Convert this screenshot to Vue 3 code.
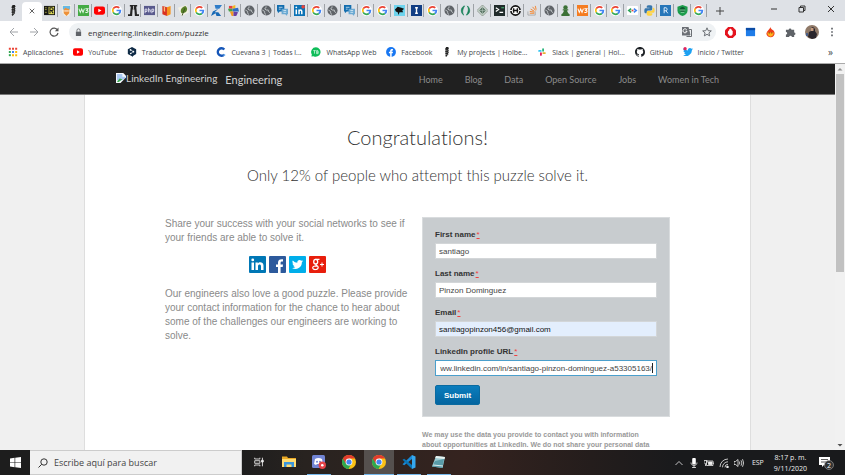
<script setup>
import { ref } from 'vue'

const tabs = [
  'code-r', 'hand', 'w3g', 'youtube', 'google', 'column', 'php', 'book', 'leaf', 'google',
  'zed', 'puzzle', 'globe', 'globe', 'chat', 'linkedin', 'google', 'globe', 'chat', 'google',
  'google', 'duck', 'letter-i', 'google', 'globe', 'parens', 'diamond', 'terminal', 'ring', 'stack',
  'globe', 'pawn', 'w3o', 'google', 'google', 'angle', 'python', 'letter-r', 'shield', 'google'
]

const bookmarks = [
  { icon: 'apps', label: 'Aplicaciones' },
  { icon: 'youtube', label: 'YouTube' },
  { icon: 'deepl', label: 'Traductor de DeepL' },
  { icon: 'cuevana', label: 'Cuevana 3 | Todas l...' },
  { icon: 'whatsapp', label: 'WhatsApp Web' },
  { icon: 'facebook', label: 'Facebook' },
  { icon: 'seahorse', label: 'My projects | Holbe...' },
  { icon: 'slack', label: 'Slack | general | Hol...' },
  { icon: 'github', label: 'GitHub' },
  { icon: 'bird', label: 'Inicio / Twitter' }
]

const nav = ['Home', 'Blog', 'Data', 'Open Source', 'Jobs', 'Women in Tech']
const social = [
  { id: 'in', name: 'LinkedIn' },
  { id: 'fb', name: 'Facebook' },
  { id: 'tw', name: 'Twitter' },
  { id: 'gp', name: 'Google Plus' }
]

const fields = ref([
  { id: 'first', label: 'First name', type: 'text', value: 'santiago' },
  { id: 'last', label: 'Last name', type: 'text', value: 'Pinzon Dominguez' },
  { id: 'email', label: 'Email', type: 'email', value: 'santiagopinzon456@gmail.com' },
  { id: 'url', label: 'LinkedIn profile URL', type: 'text', value: 'ww.linkedin.com/in/santiago-pinzon-dominguez-a53305163/' }
])

const apps = [
  { icon: 'folder', state: '' },
  { icon: 'discord', state: 'open' },
  { icon: 'chrome', state: '' },
  { icon: 'chrome', state: 'open active' },
  { icon: 'vscode', state: 'open' },
  { icon: 'notepad', state: 'open' }
]
const query = ref('')
const address = ref('engineering.linkedin.com/puzzle')
</script>

<template>
  <svg class="defs" aria-hidden="true">
    <symbol id="seahorse" viewBox="0 0 12 12"><path d="M5 0h2.500l.8 2-1 .8.9 1.200-.7 1.200.7 1.300-1 1 .6 1.300-1.200 1.200L5 12 3.800 10.500l1-.8-1-1.700.6-1.500-.7-1.400.8-1.300-.8-1.400z" fill="#222"/><path d="M4.800 4h2M4.800 6.500h2M4.800 9h2" stroke="#aaa" stroke-width=".6"/></symbol>
    <symbol id="code-r" viewBox="0 0 12 12"><path d="M0 1h12v10H0z" fill="#191a17"/><path d="M5 2h6v8H5z" fill="#e5e05a"/><path d="M6.500 9V3h2a1.500 1.500 0 0 1 0 3h-2M8 6l2 3" fill="none" stroke="#191a17" stroke-width="1.200"/><path d="M1 3h2M1 5h2M1 8h2" stroke="#bdb94a" stroke-width=".8"/></symbol>
    <symbol id="hand" viewBox="0 0 12 12"><path d="M1 0h10v8L8 12H4L1 8z" fill="#f3efe3"/><path d="M2 1h8v4H2z" fill="#67b9e5"/><path d="M3 5 5 3l2 1 2 0v5L6 12 3 9z" fill="#ee9138"/><path d="M3.500 6.500h5" stroke="#fff"/></symbol>
    <symbol id="w3g" viewBox="0 0 12 12"><path d="M0 0h12v12H0z" fill="#45ab45"/><path d="m1 4 1.500 4L4 4.500 5.500 8 7 4M8 4h3L9.500 6C12 6 11 9 8 8" fill="none" stroke="#e9f7e9" stroke-width="1.100"/></symbol>
    <symbol id="w3o" viewBox="0 0 12 12"><path d="M0 0h12v12H0z" fill="#f57c20"/><path d="m1 4 1.500 4L4 4.500 5.500 8 7 4M8 4h3L9.500 6C12 6 11 9 8 8" fill="none" stroke="#fff" stroke-width="1.100"/></symbol>
    <symbol id="youtube" viewBox="0 0 12 12"><rect y="1.500" width="12" height="9" rx="2.300" fill="#f00"/><path d="m4.700 4 3.500 2-3.500 2z" fill="#fff"/></symbol>
    <symbol id="google" viewBox="0 0 12 12"><circle cx="6" cy="6" r="6" fill="#fff"/><path d="M9 3.200A4.200 4.200 0 0 0 2.400 4" fill="none" stroke="#ea4335" stroke-width="1.900"/><path d="M2.400 4a4.200 4.200 0 0 0 0 4" fill="none" stroke="#fbbc05" stroke-width="1.900"/><path d="M2.400 8A4.200 4.200 0 0 0 8.600 9.300" fill="none" stroke="#34a853" stroke-width="1.900"/><path d="M8.600 9.300A4 4 0 0 0 10.200 6H6" fill="none" stroke="#4285f4" stroke-width="1.900"/></symbol>
    <symbol id="column" viewBox="0 0 12 12"><path d="M2 0h8v1.500H9L9.800 10H12v2H7.500L7 5H5l-.5 7H0v-2h2.200L3 1.500H2z" fill="#262626"/><path d="M6 1v4" stroke="#eee" stroke-width=".8"/></symbol>
    <symbol id="php" viewBox="0 0 12 12"><path d="M0 1h12v10H0z" fill="#58598c"/><path d="M1.200 9V4.500h2v2.500h-2M5 3v5M5 5.200h1.800V8M8.600 9V4.500h2v2.500h-2" fill="none" stroke="#f1f1fb" stroke-width=".9"/></symbol>
    <symbol id="book" viewBox="0 0 12 12"><path d="m1.500 1 5 1.500V12l-5-2z" fill="#d9301f"/><path d="M6.500 2.500 10.500 1v9l-4 2z" fill="#f7941d"/><path d="M3 1.500v5l1.500 1v-5z" fill="#f8c079"/></symbol>
    <symbol id="leaf" viewBox="0 0 12 12"><path d="m0 3 9-3 3 8-8 4z" fill="#f4f1e4"/><path d="M8 1c3 2 2.500 6-1 7.500L4 9C1.500 6 4 2 8 1z" fill="#5a812b"/><path d="m4.500 11.500 3-8" stroke="#38521a"/></symbol>
    <symbol id="zed" viewBox="0 0 12 12"><path d="M4 0h8L9 4H5z" fill="#2f7cc8"/><path d="m8 4-4 4h4l3 4H6L5 9 0 12l2-5z" fill="#1668b5"/></symbol>
    <symbol id="puzzle" viewBox="0 0 12 12"><path d="M1 1h4v3H1z" fill="#e74040"/><path d="m5 1 3-1v4H5z" fill="#f5b91a"/><path d="M0 4h5v3H1z" fill="#46a147"/><path d="m5 4 6-1 1 4H5z" fill="#2c6ec5"/><path d="M2 7h4v5H4z" fill="#f39a22"/><path d="m6 7 5 1-2 4H6z" fill="#6941a3"/></symbol>
    <symbol id="globe" viewBox="0 0 12 12"><circle cx="6" cy="6" r="5.500" fill="#5f6368"/><path d="M1.500 5.500 4 7v1.500l1 2M5.500 1.500v1.500L4 4l1.500 1.500H8V7l2 1.500" stroke="#cfd3d6" stroke-width=".9" fill="none"/></symbol>
    <symbol id="chat" viewBox="0 0 12 12"><path d="M0 0h8v7H3L1 9V7H0z" fill="#126dae"/><path d="M5 4h7v6h-1v2L9 10H5z" fill="#6ba9d2"/><path d="M2 2.500h4M2 4.500h2M7 6h3M7 8h3" stroke="#e8f4fb" stroke-width=".8"/></symbol>
    <symbol id="linkedin" viewBox="0 0 12 12"><path d="M0 0h12v12H0z" fill="#0b72b5"/><path d="M2.500 5v5M5.500 10V5m0 2c0-2 3-2 3 0v3" fill="none" stroke="#fff" stroke-width="1.600"/><circle cx="2.500" cy="2.500" r="1" fill="#fff"/><circle cx="10" cy="2" r="2" fill="#e8433c"/></symbol>
    <symbol id="duck" viewBox="0 0 12 12"><path d="M0 0h12v12H0z" fill="#6ed3ed"/><path d="m1 5 3-3 4 1 3 1-2 2 1 2-4 0-1 3-1-3-2-1z" fill="#111"/></symbol>
    <symbol id="letter-i" viewBox="0 0 12 12"><path d="M0 0h12v12H0z" fill="#123e84"/><path d="M4.500 3h3M6 3v6M4.500 9h3" stroke="#fff" stroke-width="1.500"/></symbol>
    <symbol id="parens" viewBox="0 0 12 12"><path d="M5 1C1 2 0 8 4 11 2 8 3 4 5 1zM8 1c4 3 3 9-1 10 2-3 3-7 1-10z" fill="#178158" stroke="#178158" stroke-width=".8"/></symbol>
    <symbol id="diamond" viewBox="0 0 12 12"><path d="m6 0 6 6-6 6-6-6z" fill="#dfe7e1" stroke="#879289"/><path d="m6 2 4 4-4 4-4-4z" fill="#5c7767"/><path d="M6 1v10M1 6h10" stroke="#a9bbb0" stroke-width=".7"/></symbol>
    <symbol id="terminal" viewBox="0 0 12 12"><path d="M0 0h12v12H0z" fill="#202b2b"/><path d="m2 3 3 2-3 2M6 8h4" stroke="#fff" fill="none" stroke-width="1.300"/><path d="M8 3h3" stroke="#4cc87a"/></symbol>
    <symbol id="ring" viewBox="0 0 12 12"><circle cx="6" cy="6" r="5" fill="#fff" stroke="#111" stroke-width="1.800"/><path d="M0 6h12" stroke="#fff" stroke-width="1"/><path d="M3 6h6M4 3.500v5M8 3.500v5" stroke="#111" stroke-width="1.500"/></symbol>
    <symbol id="stack" viewBox="0 0 12 12"><path d="M1 7v4h8V7" fill="none" stroke="#aaa"/><path d="M3 9h5M3 7l5 .8M4 4.500l4 2.300M6 2l3.500 4M9 1l1 4" stroke="#f48024"/></symbol>
    <symbol id="pawn" viewBox="0 0 12 12"><circle cx="6" cy="2.600" r="2.400" fill="#3c7136"/><path d="M3 4.500h6v1.500H7.500L9 9l1.500 1v2h-9v-2L3 9l1.500-3H3z" fill="#3c7136"/></symbol>
    <symbol id="angle" viewBox="0 0 12 12"><rect y="1" width="12" height="10" rx="1" fill="#fff"/><path d="M4.500 4 2 6l2.500 2" stroke="#2fa45b" stroke-width="1.800" fill="none"/><path d="m7.500 4 2.500 2-2.500 2" stroke="#4285f4" stroke-width="1.800" fill="none"/><path d="M5 6h2" stroke="#e54335" stroke-width="1.800"/></symbol>
    <symbol id="python" viewBox="0 0 12 12"><path d="M3 3V1.500C3 0 9 0 9 1.500V5L8 6H4L3 7v2H1.500C0 9 0 3.500 1.500 3.500H6V3z" fill="#3776ab"/><path d="M9 9v1.500C9 12 3 12 3 10.500V7.500l1-1h4l1.500-1V3h1C12 3 12 8.500 10.500 8.500H6V9z" fill="#ffd343"/></symbol>
    <symbol id="letter-r" viewBox="0 0 12 12"><path d="M0 0h12v12H0z" fill="#2776b9"/><path d="M4.500 9V3H6.500a1.700 1.700 0 0 1 0 3.300h-2M6.500 6.300 8.500 9" stroke="#e8f3ff" fill="none"/></symbol>
    <symbol id="shield" viewBox="0 0 12 12"><path d="m6 0 5.500 2v4C11.500 9 9 11 6 12 3 11 .5 9 .5 6V2z" fill="#1c9c4b"/><circle cx="6" cy="5" r="2.800" fill="#0b5930"/><path d="M3 5.500h6M4 8h4" stroke="#8bd7a5"/></symbol>
    <symbol id="apps" viewBox="0 0 12 12"><path d="M1 1h2.400v2.400H1zM4.800 1h2.400v2.400H4.800zM8.600 1H11v2.400H8.600z" fill="#ea4335"/><path d="M1 4.800h2.400v2.400H1z" fill="#34a853"/><path d="M4.800 4.800h2.400v2.400H4.800z" fill="#4285f4"/><path d="M8.600 4.800H11v2.400H8.600zM4.800 8.600h2.400V11H4.800zM8.600 8.600H11V11H8.600z" fill="#fbbc05"/><path d="M1 8.600h2.400V11H1z" fill="#34a853"/></symbol>
    <symbol id="deepl" viewBox="0 0 12 12"><path d="m6 0 5 2.800v5.700L8 10.200 6 12v-1L1 8.500V2.800z" fill="#0f2b46"/><path d="m4.500 3.500 3 2-3 2.300" stroke="#fff" fill="none" stroke-width=".7"/><circle cx="4.300" cy="3.500" r="1" fill="#fff"/><circle cx="7.700" cy="5.600" r="1" fill="#fff"/><circle cx="4.500" cy="7.800" r="1" fill="#fff"/></symbol>
    <symbol id="cuevana" viewBox="0 0 12 12"><path d="M10 3A4.500 4.500 0 1 0 10 9" fill="none" stroke="#1656b8" stroke-width="2.800"/><circle cx="10" cy="9.500" r="1.200" fill="#79b7f2"/></symbol>
    <symbol id="whatsapp" viewBox="0 0 12 12"><path d="M6 .3A5.700 5.700 0 1 1 3 11L.5 11.500 1 9A5.700 5.700 0 0 1 6 .3z" fill="#0fbd59"/><path d="M2.700 4.300h3M4.200 4.300V8M6.700 8V4.300h1.500q1 .9 0 1.800h-1 1.300q1 1 0 1.900z" stroke="#e9fff1" stroke-width=".8" fill="none"/></symbol>
    <symbol id="facebook" viewBox="0 0 12 12"><circle cx="6" cy="6" r="5.900" fill="#1877f2"/><path d="M5 12V7.500H3.500v-1.700H5V4.500C5 2.800 6.500 2.300 8.400 2.600v1.500c-1-.1-1.600 0-1.600.8v.9h1.600l-.3 1.700H6.800V12z" fill="#fff"/></symbol>
    <symbol id="slack" viewBox="0 0 12 12"><g stroke-width="2.200" stroke-linecap="round"><path d="M2.500 4.700h2" stroke="#36c5f0"/><path d="M7.300 2.500v2" stroke="#2eb67d"/><path d="M7.500 7.300h2" stroke="#ecb22e"/><path d="M4.700 7.500v2" stroke="#e01e5a"/></g></symbol>
    <symbol id="github" viewBox="0 0 16 16"><path fill="#1b1f23" d="M8 0C3.580 0 0 3.580 0 8c0 3.540 2.290 6.530 5.470 7.590.4.070.55-.17.55-.38 0-.19-.01-.82-.01-1.490-2.010.37-2.530-.49-2.690-.94-.09-.23-.48-.94-.82-1.130-.28-.15-.68-.52-.01-.53.63-.01 1.080.58 1.230.82.72 1.210 1.870.87 2.330.66.07-.52.28-.87.51-1.070-1.780-.2-3.640-.89-3.640-3.950 0-.87.31-1.590.82-2.150-.08-.2-.36-1.020.08-2.120 0 0 .67-.21 2.200.82a7.700 7.700 0 0 1 4 0c1.530-1.040 2.200-.82 2.200-.82.44 1.100.16 1.920.08 2.120.51.56.82 1.270.82 2.150 0 3.070-1.870 3.750-3.650 3.950.29.25.54.73.54 1.480 0 1.070-.01 1.930-.01 2.200 0 .21.15.46.55.38A8 8 0 0 0 16 8c0-4.420-3.580-8-8-8z"/></symbol>
    <symbol id="birdshape" viewBox="0 0 24 24"><path d="M24 4.600a10 10 0 0 1-2.800.8 5 5 0 0 0 2.100-2.700 10 10 0 0 1-3.100 1.200 4.900 4.900 0 0 0-8.400 4.500A14 14 0 0 1 1.700 3.200a4.900 4.900 0 0 0 1.500 6.500 5 5 0 0 1-2.200-.6 4.900 4.900 0 0 0 4 4.900 5 5 0 0 1-2.300.1 4.900 4.900 0 0 0 4.600 3.400A10 10 0 0 1 0 19.500a14 14 0 0 0 21.500-12.400A10 10 0 0 0 24 4.600z"/></symbol>
    <symbol id="bird" viewBox="0 0 24 24"><use href="#birdshape" fill="#1da1f2"/><circle cx="5" cy="4" r="4" fill="#e0245e"/></symbol>
    <symbol id="in" viewBox="0 0 17 17"><rect width="17" height="17" rx="1" fill="#0077b5"/><path d="M2.500 6.500H5V14H2.500zM6.500 6.500h2.300v1c1.300-2 5.700-1.600 5.700 2V14H12V10c0-2.300-3-2-3 0v4H6.500z" fill="#fff"/><circle cx="3.750" cy="3.900" r="1.400" fill="#fff"/></symbol>
    <symbol id="fb" viewBox="0 0 17 17"><rect width="17" height="17" rx="1" fill="#2d5a9c"/><path d="M9 17v-6H7V8.500h2V6.700c0-3 2-3.800 5-3.400v2.300c-1.700-.1-2.400 0-2.400 1.300v1.600H14l-.3 2.500h-2.100v6z" fill="#fff"/></symbol>
    <symbol id="tw" viewBox="0 0 17 17"><rect width="17" height="17" rx="1" fill="#00aeea"/><use href="#birdshape" x="3" y="3" width="11" height="11" fill="#fff"/></symbol>
    <symbol id="gp" viewBox="0 0 17 17"><rect width="17" height="17" rx="1" fill="#e81e0c"/><g fill="none" stroke="#fff"><ellipse cx="6.700" cy="5.700" rx="2" ry="2.300" stroke-width="1.300"/><path d="M6.500 3.400h4M7.500 8c-2 1 1.500 1.500 1.700 3.200 0 3-5.500 3-5.500.6C3.700 10 6 9.800 8 9.800" stroke-width="1.200"/><path d="M11 8.500h4M13 6.500v4"/></g></symbol>
    <symbol id="folder" viewBox="0 0 14 14"><path d="M0 1.500h5l1 1.500h8v9H0z" fill="#e9a824"/><path d="M0 4h14v8H0z" fill="#ffdc72"/><path d="M2 7h10v5H9.500V9.500h-5V12H2z" fill="#3a96dc"/></symbol>
    <symbol id="discord" viewBox="0 0 14 14"><rect width="13" height="13" rx="1.500" fill="#7285d4"/><path d="M3 4c2-1.300 5-1.300 7 0l1 5-2 1-.8-1H5l-1 1-2-1z" fill="#fff"/><circle cx="5" cy="6.800" r="1" fill="#7285d4"/><circle cx="8" cy="6.800" r="1" fill="#7285d4"/><circle cx="10.300" cy="10.300" r="3.700" fill="#e54348"/><circle cx="10.300" cy="10.300" r="1.300" fill="#fff"/></symbol>
    <symbol id="chrome" viewBox="0 0 14 14"><circle cx="7" cy="7" r="7" fill="#fbc116"/><path d="M7 7 .9 3.500A7 7 0 0 0 6.500 14L9.500 8.500z" fill="#2da94f"/><path d="M7 3.500h6.100A7 7 0 0 0 .9 3.500L4 8.800z" fill="#e33b2e"/><circle cx="7" cy="7" r="3.400" fill="#fff"/><circle cx="7" cy="7" r="2.600" fill="#4285f4"/></symbol>
    <symbol id="vscode" viewBox="0 0 14 14"><path d="M10 0v4L2.200 10.300.5 9.300 10 0z" fill="#1b8ad6"/><path d="M.5 4.700 2.200 3.700 10 10v4z" fill="#0876b9"/><path d="m10 0 3.500 1.500v11L10 14z" fill="#35a8f0"/></symbol>
    <symbol id="notepad" viewBox="0 0 14 14"><path d="m4 1 9 1-2.500 11L0 11.500z" fill="#9bcbd3"/><path d="m4 1 9 1-.5 2L3.200 3z" fill="#e9f2f0"/><path d="M3 6 12 4 10.500 13 0 11.500z" fill="#599ba8"/><path d="M1 10 11 11" stroke="#dcebed"/></symbol>
  </svg>

  <div class="screen">
    <header class="browser">
      <div class="tabs">
        <div class="tab-list">
          <span class="tab lead"><svg><use href="#seahorse" /></svg></span>
          <button class="tab current" aria-label="Cerrar"><svg class="cross" viewBox="0 0 8 8"><path d="m1 1 6 6M7 1 1 7" /></svg></button>
          <span v-for="(t, i) in tabs" :key="i" class="tab rule"><svg><use :href="'#' + t" /></svg></span>
        </div>
        <button class="plus" aria-label="Nueva pestaña"><svg viewBox="0 0 8 8"><path d="M4 0v8M0 4h8" /></svg></button>
        <div class="win">
          <button aria-label="Minimizar"><svg viewBox="0 0 8 8"><path d="M1 4h6" /></svg></button>
          <button aria-label="Restaurar"><svg viewBox="0 0 8 8"><path d="M1 2.500h4.500V7H1zM2.500 2.500V1H7v4.500H5.500" /></svg></button>
          <button aria-label="Cerrar ventana"><svg viewBox="0 0 8 8"><path d="m1 1 6 6M7 1 1 7" /></svg></button>
        </div>
      </div>

      <div class="toolbar">
        <div class="history">
          <button aria-label="Atrás"><svg viewBox="0 0 10 10" class="dim"><path d="M9 5H1M5 1 1 5l4 4" /></svg></button>
          <button aria-label="Adelante"><svg viewBox="0 0 10 10" class="dim"><path d="M1 5h8M5 1l4 4-4 4" /></svg></button>
          <button aria-label="Recargar"><svg viewBox="0 0 10 10"><path d="M8.500 3A4 4 0 1 0 9 6" /><path class="solid" d="M9.500.5V4.200H5.800z" /></svg></button>
        </div>
        <div class="omnibox">
          <svg class="lock" viewBox="0 0 8 10"><path d="M2.200 4V2.600a1.800 1.800 0 0 1 3.600 0V4" /><path class="solid" d="M1 4h6v5H1z" /></svg>
          <input v-model="address" aria-label="Dirección">
          <svg class="glyph" viewBox="0 0 10 10"><path fill="#6b6f74" d="M0 0h6l2 8H0z" /><path d="M6.500 2.500h3v7h-5" /><path stroke="#fff" d="M4.700 2.700a2 2 0 1 0 .3 1.500H3.500" /></svg>
          <svg class="glyph" viewBox="0 0 10 10"><path d="m5 .8 1.200 2.900 3.100.2-2.400 2 .8 3L5 7.300 2.300 8.900l.8-3-2.400-2 3.100-.2z" /></svg>
        </div>
        <div class="extensions">
          <svg viewBox="0 0 12 12"><path fill="#e4141e" d="M3.500 0h5L12 3.500v5L8.500 12h-5L0 8.500v-5z" /><path fill="#fff" d="M3.500 4h1V2.500h1V2h1v.8h1V4h.9v4L7 9.500H5L3 6.800z" /></svg>
          <svg viewBox="0 0 12 12"><path fill="#1f7ce8" d="M1 1h10v9H1z" /><path fill="#0a4ba5" d="M1 1h10v2.500H1z" /></svg>
          <svg viewBox="0 0 12 12"><path fill="#ee3b1b" d="M6 0c0 3 4 2.500 4.500 6.500A4.500 4.500 0 0 1 1.500 7C2 4 5 3 6 0z" /><path fill="#ffb11b" d="M2.500 6h7c0 6-7 6-7 0z" /><path stroke="#60270e" d="M4 6.500h1.300M6.800 6.500H8" /></svg>
          <svg viewBox="0 0 12 12"><path fill="#5f6368" d="M1 3h3a1.500 1.500 0 0 1 3 0h3v3a1.400 1.400 0 0 1 0 2.800V11H7.500a1.500 1.500 0 0 0-3 0H1V8.300a1.400 1.400 0 0 0 0-2.800z" /></svg>
          <svg class="avatar" viewBox="0 0 14 14"><circle cx="7" cy="7" r="7" fill="#8f7968" /><path fill="#2a252b" d="M3 12 4 7l2-1V3l2-1 2 2v2l2 3-1 4-4 1z" /><path fill="#c79d80" d="M6 3h2.500v3H6z" /><path fill="#4a5f88" d="M1 8h2v3H1z" /></svg>
          <svg class="dots" viewBox="0 0 4 12"><path fill="#5f6368" d="M1 1h2v2H1zM1 5h2v2H1zM1 9h2v2H1z" /></svg>
        </div>
      </div>

      <nav class="bookmarks" aria-label="Marcadores">
        <div class="mark-list">
          <a v-for="b in bookmarks" :key="b.label" href="#"><svg><use :href="'#' + b.icon" /></svg>{{ b.label }}</a>
        </div>
        <button class="more" aria-label="Más marcadores">»</button>
      </nav>
    </header>

    <div class="viewport">
      <div class="page">
        <div class="site-head">
          <div class="site-inner">
            <a class="brand" href="#">
              <svg viewBox="0 0 11 11"><path fill="#f5f8fc" d="M0 0h8l3 3v8H0z" /><path fill="#a9c8f0" d="M1 1h6v3h3v2L4 9 1 8z" /><path fill="#3bab4b" d="m1 10 3-4 3 1-4 3z" /><path fill="#202020" d="m5 11 6-6v6z" /></svg>
              <span class="alt">LinkedIn Engineering</span>
              <span class="name">Engineering</span>
            </a>
            <nav class="site-nav"><a v-for="n in nav" :key="n" href="#">{{ n }}</a></nav>
          </div>
        </div>

        <main class="sheet">
          <h1>Congratulations!</h1>
          <h2>Only 12% of people who attempt this puzzle solve it.</h2>
          <div class="columns">
            <section class="story">
              <p>Share your success with your social networks to see if your friends are able to solve it.</p>
              <div class="social">
                <a v-for="s in social" :key="s.id" href="#" :aria-label="s.name"><svg><use :href="'#' + s.id" /></svg></a>
              </div>
              <p>Our engineers also love a good puzzle. Please provide your contact information for the chance to hear about some of the challenges our engineers are working to solve.</p>
            </section>
            <section class="contact">
              <form @submit.prevent>
                <div v-for="f in fields" :key="f.id" class="field" :class="f.id">
                  <label :for="f.id">{{ f.label }}<abbr title="required">*</abbr></label>
                  <input :id="f.id" v-model="f.value" :type="f.type">
                  <i v-if="f.id === 'url'" class="caret"></i>
                </div>
                <button type="submit">Submit</button>
              </form>
              <p class="legal">We may use the data you provide to contact you with information<br>about opportunities at LinkedIn. We do not share your personal data</p>
            </section>
          </div>
        </main>
      </div>
      <div class="scroll" aria-hidden="true">
        <svg viewBox="0 0 10 10"><path d="M2.500 6.500 5 4l2.500 2.500z" fill="#909090" /></svg>
        <div class="track"><div class="thumb"></div></div>
        <svg viewBox="0 0 10 10"><path d="M2.500 4 5 6.500 7.500 4z" fill="#505050" /></svg>
      </div>
    </div>

    <footer class="taskbar">
      <button class="start" aria-label="Inicio"><svg viewBox="0 0 12 12"><path fill="#fff" d="m0 1.700 5-.8v4.700H0zM5.700.8 12 0v5.600H5.700zM0 6.300h5v4.800l-5-.8zM5.700 6.300H12V12l-6.300-.9z" /></svg></button>
      <label class="find">
        <svg viewBox="0 0 10 10"><circle cx="6" cy="4" r="3.200" /><path d="M3.700 6.300.5 9.500" /></svg>
        <input v-model="query" placeholder="Escribe aquí para buscar" aria-label="Buscar">
      </label>
      <div class="apps">
        <button class="app" aria-label="Vista de tareas"><svg class="task" viewBox="0 0 14 14"><path d="M2 2v1.500h6V2M2 12v-1.500h6V12M2 5.500h6v3H2zM11 2v10" /><path fill="#eee" d="M10 5h2v2h-2z" /></svg></button>
        <button v-for="(a, i) in apps" :key="i" class="app" :class="a.state" :aria-label="a.icon"><svg><use :href="'#' + a.icon" /></svg></button>
      </div>
      <div class="tray">
        <svg viewBox="0 0 10 10"><path d="M1.500 7 5 3.500 8.500 7" /></svg>
        <svg viewBox="0 0 10 10"><rect x="3.200" width="3.600" height="6.500" rx="1" fill="#fff" stroke="none" /><path d="M2 4.500c0 4 6 4 6 0M5 7.500V10M3 9.500h4" /></svg>
        <svg viewBox="0 0 10 10"><path d="M2.500 3H9v4.500H2.500zM9.700 4.500v1.500M0 2.500h3v2L1.500 6 0 4.500zM1.500 6v2" /><path fill="#eee" d="M4.500 4h3.500v2.500H4.500z" /></svg>
        <svg viewBox="0 0 10 10"><path d="M1 9a8 8 0 0 1 8-8M3.500 9.300A5.500 5.500 0 0 1 9 3.800M6 9.300a3 3 0 0 1 3-3" /><circle cx="8.500" cy="9" r=".9" fill="#fff" /></svg>
        <svg viewBox="0 0 10 10"><path d="M0 3.500h1.500L4 1.500v7L1.500 6.500H0zM5.300 3.500q1 1.500 0 3M7 2.300q1.800 2.700 0 5.400M8.500 1.200q2.400 3.800 0 7.600" /></svg>
        <span class="lang">ESP</span>
        <span class="clock">8:17 p. m.<br>9/11/2020</span>
        <svg class="notice" viewBox="0 0 16 14"><path fill="#fff" stroke="none" d="M1 1h11v8H6l-2 2V9H1z" /><path stroke="#333" d="M3 3.500h7M3 6h7" /><circle cx="11" cy="9" r="4.500" fill="#333" stroke="#aaa" stroke-width=".6" /><text x="11" y="11.500">2</text></svg>
      </div>
    </footer>
  </div>
</template>

<style>
body { margin: 0; overflow: hidden; }
</style>

<style scoped>
* { box-sizing: border-box; }
.defs { position: absolute; width: 0; height: 0; }
.screen { display: flex; flex-direction: column; height: 100vh; overflow: hidden; font-family: "Open Sans", "Noto Sans", sans-serif; }
button { border: 0; padding: 0; background: none; font: inherit; color: inherit; display: flex; align-items: center; justify-content: center; }
a { color: inherit; text-decoration: none; }
input { font: inherit; color: inherit; border: 0; outline: 0; padding: 0; background: none; min-width: 0; }

.browser { flex: none; background: #fff; border-bottom: 1px solid #aaa; }
.tabs { display: flex; height: 21px; background: #dee1e6; }
.tab-list { display: flex; flex: 1; padding-left: 5px; }
.tab { flex: 1; display: flex; align-items: center; justify-content: center; }
.tab svg { width: 11px; height: 11px; }
.tab.rule { background: linear-gradient(#9da1a6, #9da1a6) right center / 1px 13px no-repeat; }
.tab.current { flex: none; width: 20px; margin-top: 2px; background: #fff; border-radius: 4px 4px 0 0; }
.tab svg.cross { width: 6px; height: 6px; margin-bottom: 2px; stroke: #333; }
.plus { width: 26px; }
.plus svg { width: 8px; height: 8px; stroke: #444; }
.win { display: flex; width: 112px; padding-left: 27px; }
.win button { flex: 1; padding-bottom: 3px; }
.win svg { width: 8px; height: 8px; stroke: #333; stroke-width: 1; fill: none; }

.toolbar { display: flex; align-items: center; height: 22px; }
.history { display: flex; gap: 10px; padding: 0 10px 0 9px; }
.history svg { width: 10px; height: 10px; fill: none; stroke: #555; stroke-width: 1.2; }
.history svg.dim { stroke: #a0a3a7; stroke-width: 1; }
.history .solid { fill: #555; stroke: none; }
.omnibox { flex: 1; display: flex; align-items: center; height: 18px; padding: 0 4px 0 6px; border-radius: 9px; background: #eff2f4; color: #333; font-size: 8px; }
.omnibox input { flex: 1; margin-left: 6px; }
.lock { width: 7px; height: 9px; fill: none; stroke: #5f6368; }
.lock .solid { fill: #5f6368; stroke: none; }
.glyph { width: 10px; height: 10px; margin-left: 10px; fill: none; stroke: #6b6f74; stroke-width: 1; }
.extensions { display: flex; align-items: center; gap: 9px; padding: 0 11px 0 9px; }
.extensions svg { width: 11px; height: 11px; }
.extensions svg.avatar { width: 14px; height: 14px; }
.extensions svg.dots { width: 4px; height: 10px; margin-left: 2px; }

.bookmarks { display: flex; align-items: center; justify-content: space-between; height: 20px; padding: 0 12px 2px 8px; color: #44484c; font-size: 7px; }
.mark-list { flex: 1; max-width: 736px; display: flex; justify-content: space-between; }
.bookmarks a { display: flex; align-items: center; gap: 5px; white-space: nowrap; }
.bookmarks svg { width: 10px; height: 10px; }
.bookmarks .more { font-size: 10px; line-height: 12px; }

.viewport { flex: 1; min-height: 0; display: flex; }
.page { flex: 1; min-width: 0; display: flex; flex-direction: column; background: #f0f0f0; overflow: hidden; }
.site-head { flex: none; background: #202020; border-bottom: 1px solid #777; font-family: Lato, sans-serif; }
.site-inner { display: flex; justify-content: space-between; align-items: center; max-width: 603px; height: 30px; margin: 0 auto; padding-top: 1px; }
.brand { display: flex; align-items: center; color: #d0d0d0; font-size: 10px; line-height: 14px; white-space: nowrap; }
.brand svg { width: 10px; height: 10px; margin-bottom: 4px; }
.alt { padding-bottom: 3px; }
.name { margin-left: 8px; font-size: 11px; }
.site-nav { display: flex; gap: 22px; color: #8b8b8b; font-size: 9px; }
.sheet { flex: 1; width: 100%; max-width: 667px; margin: 0 auto; padding: 29px 80px 0; background: #fff; border: 1px solid #dedede; border-width: 0 1px; }
h1, h2 { margin: 0; text-align: center; font-family: Lato, sans-serif; font-weight: 300; font-variant-ligatures: none; color: #333; }
h1 { font-size: 20px; line-height: 26px; }
h2 { margin-top: 15px; font-size: 15px; line-height: 20px; }
.columns { display: grid; grid-template-columns: 244fr 248fr; gap: 13px; margin-top: 32px; font-family: "Liberation Sans", Arial, sans-serif; }
.story { color: #8a8a8a; font-size: 10px; line-height: 14px; }
.story p { margin: 0; }
.social { display: flex; justify-content: center; gap: 3px; margin: 11px 0 14px; }
.social svg { display: block; width: 17px; height: 17px; }
form { padding: 11px 12px; background: #c8cccf; border: 1px solid #d9dcde; font-size: 8px; }
.field { position: relative; display: flex; flex-direction: column; gap: 2px; margin-bottom: 9px; }
.field label { color: #333; font-weight: bold; line-height: 12px; }
abbr { margin-left: 1px; color: #f04040; font-weight: normal; text-decoration: underline; }
.field input { height: 16px; padding: 0 3px; background: #fff; border: 1px solid #d3d6d8; color: #444; }
.field.email input { background: #e3eefd; color: #111; }
.field.url input { border-color: #4b9fcc; padding-right: 4px; text-align: right; }
.caret { position: absolute; right: 4px; bottom: 3px; width: 1px; height: 10px; background: #222; }
form button { width: 45px; height: 20px; border: 1px solid #0a6aa0; border-radius: 2px; background: linear-gradient(#0b7dbd, #0465a0); color: #fff; font-weight: bold; font-size: 8px; }
.legal { margin: 13px 0 0; color: #999; font-size: 7px; line-height: 10px; font-weight: bold; }

.scroll { width: 10px; display: flex; flex-direction: column; background: #f1f1f1; }
.scroll svg { flex: none; width: 10px; height: 10px; }
.track { flex: 1; padding: 0 1px; }
.thumb { height: 54%; background: #c1c1c1; }

.taskbar { flex: none; display: flex; height: 25px; background: linear-gradient(90deg, #1d1d1d 0 28%, #282320 36%, #35231f 55%, #241d1c 70%, #191a1c 80%); color: #eee; }
.start { width: 30px; }
.start svg { width: 11px; height: 11px; }
.find { display: flex; align-items: center; width: 212px; padding: 0 8px; background: #f1f1f1; border: 1px solid #ccc; border-left: 0; color: #444; font-size: 9px; }
.find svg { width: 10px; height: 10px; fill: none; stroke: #333; }
.find input { flex: 1; margin-left: 6px; }
.find input::placeholder { color: #444; opacity: 1; }
.apps { display: flex; flex: 1; padding-left: 2px; }
.app { width: 30px; border-bottom: 1px solid transparent; }
.app svg { width: 14px; height: 14px; }
.app svg.task { fill: none; stroke: #eee; width: 12px; height: 12px; }
.app.open { background: linear-gradient(#76b9ed, #76b9ed) center bottom / 24px 1px no-repeat border-box; }
.app.active { background: linear-gradient(#76b9ed, #76b9ed) center bottom / 30px 1px no-repeat border-box #55504e; }
.tray { display: flex; align-items: center; gap: 5px; padding-right: 11px; font-size: 7px; }
.tray svg { width: 10px; height: 10px; fill: none; stroke: #eee; stroke-width: .8; }
.tray svg.notice { width: 16px; height: 14px; }
.notice text { fill: #fff; stroke: none; font-size: 7px; text-anchor: middle; }
.lang { margin-left: 3px; }
.clock { margin: 0 6px 0 5px; text-align: center; line-height: 11px; }
</style>
